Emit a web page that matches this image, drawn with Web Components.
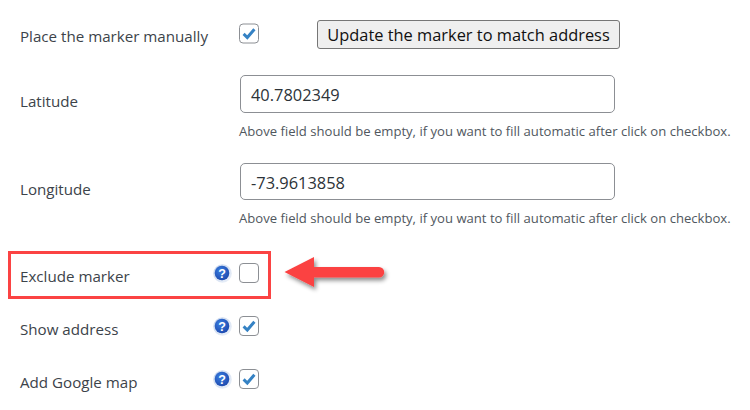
<!DOCTYPE html>
<html>
<head>
<meta charset="utf-8">
<style>
html, body { margin: 0; background: #fff; }
body { width: 750px; height: 410px; overflow: hidden; font-family: "Open Sans", "Noto Sans", sans-serif; }
</style>
</head>
<body>
<settings-form>
  <form-row style="--row-h:29px;--row-top:20px;--label-y:1px">
    <span slot="label">Place the marker manually</span>
    <check-box checked style="--box-y:-1.5px"></check-box>
    <wp-button style="margin-left:58px">Update the marker to match address</wp-button>
  </form-row>
  <form-row style="--row-h:38px;--row-top:26px;--label-y:7px">
    <span slot="label">Latitude</span>
    <text-field value="40.7802349"></text-field>
    <field-note slot="note">Above field should be empty, if you want to fill automatic after click on checkbox.</field-note>
  </form-row>
  <form-row style="--row-h:37px;--row-top:23px;--label-y:7px">
    <span slot="label">Longitude</span>
    <text-field value="-73.9613858"></text-field>
    <field-note slot="note">Above field should be empty, if you want to fill automatic after click on checkbox.</field-note>
  </form-row>
  <form-row help style="--row-h:20px;--row-top:36px;--label-y:3px">
    <span slot="label">Exclude marker</span>
    <check-box></check-box>
  </form-row>
  <form-row help style="--row-h:20px;--row-top:33px;--label-y:3px">
    <span slot="label">Show address</span>
    <check-box checked></check-box>
  </form-row>
  <form-row help style="--row-h:20px;--row-top:33px;--label-y:3px">
    <span slot="label">Add Google map</span>
    <check-box checked></check-box>
  </form-row>
  <callout-mark></callout-mark>
</settings-form>

<script>
class SettingsForm extends HTMLElement {
    connectedCallback() {
        this.attachShadow({ mode: 'open' }).innerHTML = `
            <style>
                :host { display: flow-root; position: relative; width: 750px; height: 410px; }
            </style>
            <slot></slot>
        `;
    }
}

class FormRow extends HTMLElement {
    connectedCallback() {
        const help = this.hasAttribute('help');
        this.attachShadow({ mode: 'open' }).innerHTML = `
            <style>
                :host {
                    display: grid;
                    grid-template-columns: 194px 26px 1fr;
                    margin-top: var(--row-top);
                    padding-left: 20px;
                    font-size: 15.15px;
                    color: #3c434a;
                }
                .label {
                    height: var(--row-h);
                    display: flex;
                    align-items: center;
                    white-space: nowrap;
                    transform: translateY(var(--label-y));
                }
                .help { height: var(--row-h); display: flex; align-items: center; }
                .control { height: var(--row-h); display: flex; align-items: center; }
                .note { grid-column: 3; }
            </style>
            <div class="label"><slot name="label"></slot></div>
            <div class="help">${help ? '<help-icon></help-icon>' : ''}</div>
            <div class="control"><slot></slot></div>
            <div class="note"><slot name="note"></slot></div>
        `;
    }
}

class CheckBox extends HTMLElement {
    connectedCallback() {
        const tick = this.hasAttribute('checked')
            ? '<svg viewBox="0 0 20 20" width="20" height="20"><path d="M4.6 10.4 L8.3 14 L15.4 5.8" fill="none" stroke="#3582c4" stroke-width="3"/></svg>'
            : '';
        this.attachShadow({ mode: 'open' }).innerHTML = `
            <style>
                :host {
                    display: block;
                    width: 20px;
                    height: 20px;
                    margin-left: -1px;
                    box-sizing: border-box;
                    border: 1px solid #8c8f94;
                    border-radius: 4px;
                    background: #fff;
                    transform: translateY(var(--box-y, 0));
                }
                svg { display: block; margin: -1px; }
            </style>
            ${tick}
        `;
    }
}

class HelpIcon extends HTMLElement {
    connectedCallback() {
        this.attachShadow({ mode: 'open' }).innerHTML = `
            <style>
                :host { display: block; width: 19px; height: 19px; margin-left: -1px; }
                svg { display: block; }
                text { font: bold 12.5px "Liberation Sans", sans-serif; fill: #fff; }
            </style>
            <svg viewBox="0 0 19 19" width="19" height="19">
                <defs>
                    <radialGradient id="orb" cx="0.4" cy="0.35" r="0.7">
                        <stop offset="0" stop-color="#3a7ee0"/>
                        <stop offset="1" stop-color="#1c48ad"/>
                    </radialGradient>
                    <linearGradient id="halo" x1="0" y1="0" x2="1" y2="1">
                        <stop offset="0" stop-color="#c3d3ec"/>
                        <stop offset="1" stop-color="#eef3fa"/>
                    </linearGradient>
                </defs>
                <circle cx="9.5" cy="9.5" r="9.3" fill="url(#halo)"/>
                <circle cx="9" cy="9" r="7.3" fill="url(#orb)"/>
                <text x="9" y="13.5" text-anchor="middle">?</text>
            </svg>
        `;
    }
}

class WpButton extends HTMLElement {
    connectedCallback() {
        this.attachShadow({ mode: 'open' }).innerHTML = `
            <style>
                :host {
                    display: block;
                    box-sizing: border-box;
                    width: 303px;
                    height: 29px;
                    border: 1px solid #767676;
                    border-radius: 3px;
                    background: #efefef;
                    color: #111;
                    font-size: 16.4px;
                    line-height: 28px;
                    text-align: center;
                    white-space: nowrap;
                }
            </style>
            <slot></slot>
        `;
    }
}

class TextField extends HTMLElement {
    connectedCallback() {
        this.attachShadow({ mode: 'open' }).innerHTML = `
            <style>
                :host {
                    display: block;
                    box-sizing: border-box;
                    width: 375px;
                    height: 100%;
                    border: 1px solid #8c8f94;
                    border-radius: 5px;
                    padding-left: 10px;
                    background: #fff;
                    color: #2c3338;
                    font-size: 16.4px;
                    line-height: 37px;
                }
            </style>
            ${this.getAttribute('value')}
        `;
    }
}

class FieldNote extends HTMLElement {
    connectedCallback() {
        this.attachShadow({ mode: 'open' }).innerHTML = `
            <style>
                :host {
                    display: block;
                    margin: 9px 0 0 -1px;
                    font-size: 13.1px;
                    line-height: 18px;
                    color: #50575e;
                    white-space: nowrap;
                }
            </style>
            <slot></slot>
        `;
    }
}

// red annotation painted over the form
class CalloutMark extends HTMLElement {
    connectedCallback() {
        this.attachShadow({ mode: 'open' }).innerHTML = `
            <style>
                :host { position: absolute; left: 0; top: 0; width: 750px; height: 410px; pointer-events: none; }
                .box {
                    position: absolute;
                    left: 8px;
                    top: 251px;
                    width: 263px;
                    height: 48px;
                    box-sizing: border-box;
                    border: 3px solid #fb4343;
                }
                svg { position: absolute; left: 275px; top: 250px; }
            </style>
            <div class="box"></div>
            <svg width="120" height="50" viewBox="0 0 120 50">
                <defs>
                    <filter id="soft" x="-20%" y="-30%" width="140%" height="170%">
                        <feDropShadow dx="2" dy="3" stdDeviation="2" flood-color="#000" flood-opacity="0.45"/>
                    </filter>
                </defs>
                <path d="M9.5 22 L39 7 L39 17 L104 17 A5 5 0 0 1 104 27.5 L39 27.5 L39 37 Z" fill="#fb4343" filter="url(#soft)"/>
            </svg>
        `;
    }
}

customElements.define('settings-form', SettingsForm);
customElements.define('form-row', FormRow);
customElements.define('check-box', CheckBox);
customElements.define('help-icon', HelpIcon);
customElements.define('wp-button', WpButton);
customElements.define('text-field', TextField);
customElements.define('field-note', FieldNote);
customElements.define('callout-mark', CalloutMark);
</script>
</body>
</html>
